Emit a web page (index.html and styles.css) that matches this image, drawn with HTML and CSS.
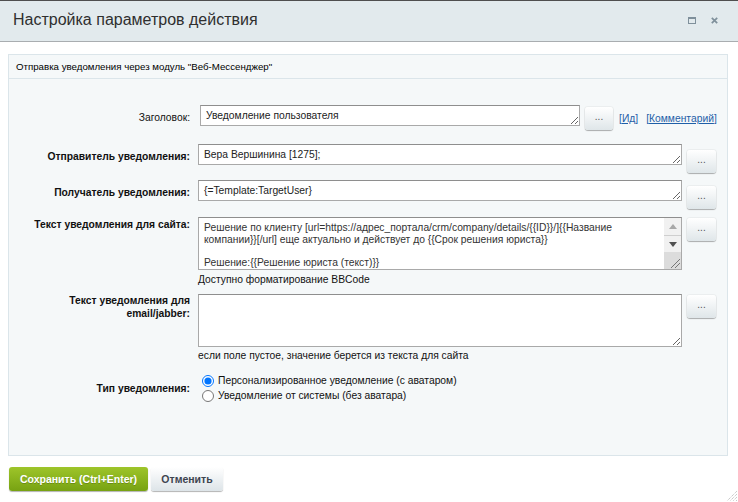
FILE: index.html
```html
<!DOCTYPE html>
<html lang="ru">
<head>
<meta charset="utf-8">
<title>Настройка параметров действия</title>
<link rel="stylesheet" href="styles.css">
</head>
<body>
<div class="dialog">
  <div class="topline"></div>
  <div class="titlebar">
    <span class="title">Настройка параметров действия</span>
    <span class="win-icons">
      <svg class="ico-max" width="8" height="7" viewBox="0 0 8 7"><rect x="0.5" y="0.5" width="7" height="6" fill="none" stroke="#7f909b"/><rect x="0" y="0" width="8" height="2" fill="#7f909b"/></svg>
      <svg class="ico-close" width="7" height="7" viewBox="0 0 7 7"><path d="M0.8 0.8 L6.2 6.2 M6.2 0.8 L0.8 6.2" stroke="#7f909b" stroke-width="1.7"/></svg>
    </span>
  </div>
  <div class="content">
    <div class="panel">
      <div class="panel-head">Отправка уведомления через модуль "Веб-Мессенджер"</div>
      <div class="form">
        <div class="row row-title">
          <div class="label plain">Заголовок:</div>
          <div class="field">
            <textarea class="inp inp-short" rows="1">Уведомление пользователя</textarea>
            <button class="dots dots-r1" type="button">...</button>
            <span class="links"><a class="lnk" href="#">[<u>Ид</u>]</a><a class="lnk" href="#">[<u>Комментарий</u>]</a></span>
          </div>
        </div>
        <div class="row row-sender">
          <div class="label">Отправитель уведомления:</div>
          <div class="field">
            <textarea class="inp" rows="1">Вера Вершинина [1275];</textarea>
            <button class="dots dots-low" type="button">...</button>
          </div>
        </div>
        <div class="row row-recipient">
          <div class="label">Получатель уведомления:</div>
          <div class="field">
            <textarea class="inp" rows="1">{=Template:TargetUser}</textarea>
            <button class="dots dots-low" type="button">...</button>
          </div>
        </div>
        <div class="row row-site">
          <div class="label top">Текст уведомления для сайта:</div>
          <div class="field-col">
            <div class="field">
              <div class="area-box">
                <textarea class="area-text">Решение по клиенту [url=https://адрес_портала/crm/company/details/{{ID}}/]{{Название компании}}[/url] еще актуально и действует до {{Срок решения юриста}}

Решение:{{Решение юриста (текст)}}
Комментарий юриста:{{Комментарий юриста}}</textarea>
                <div class="sbar">
                  <div class="sb-btn sb-up"><svg width="8" height="5" viewBox="0 0 8 5"><path d="M0 5 L4 0 L8 5 Z" fill="#a8a8a8"/></svg></div>
                  <div class="sb-btn sb-down"><svg width="8" height="5" viewBox="0 0 8 5"><path d="M0 0 L4 5 L8 0 Z" fill="#505050"/></svg></div>
                  <div class="sb-corner"><svg width="10" height="10" viewBox="0 0 10 10"><path d="M10 1 L1 10 M10 5 L5 10" stroke="#777" stroke-width="1"/></svg></div>
                </div>
              </div>
              <button class="dots dots-area" type="button">...</button>
            </div>
            <div class="note note-site">Доступно форматирование BBCode</div>
          </div>
        </div>
        <div class="row row-mail">
          <div class="label top up">Текст уведомления для email/jabber:</div>
          <div class="field-col">
            <div class="field">
              <textarea class="area"></textarea>
              <button class="dots dots-area" type="button">...</button>
            </div>
            <div class="note note-mail">если поле пустое, значение берется из текста для сайта</div>
          </div>
        </div>
        <div class="row row-type">
          <div class="label mid">Тип уведомления:</div>
          <div class="radios">
            <label class="radio"><input type="radio" name="t" checked> Персонализированное уведомление (с аватаром)</label>
            <label class="radio"><input type="radio" name="t"> Уведомление от системы (без аватара)</label>
          </div>
        </div>
      </div>
    </div>
  </div>
  <div class="footer">
    <button class="btn-save" type="button">Сохранить (Ctrl+Enter)</button>
    <button class="btn-cancel" type="button">Отменить</button>
  </div>
  <svg class="grip" width="12" height="12" viewBox="0 0 12 12">
    <path d="M11 1 L1 11 M11 4 L4 11 M11 7 L7 11 M11 10 L10 11" stroke="#b5b5b5" stroke-width="1" stroke-dasharray="1 1"/>
  </svg>
</div>
</body>
</html>
```
FILE: styles.css
```css
* { box-sizing: border-box; }
html, body { margin: 0; padding: 0; }
body {
  background: #fff;
  font-family: "Liberation Sans", Arial, sans-serif;
  font-size: 10.3px;
  color: #000;
  width: 738px;
  height: 502px;
  overflow: hidden;
}
.dialog { position: relative; width: 738px; height: 502px; }
.topline { height: 1px; background: #4f4f4f; }
.titlebar {
  height: 41px;
  background: #e2eaed;
  border-bottom: 1px solid #a9adb0;
  display: flex;
  align-items: center;
  padding: 0 20px 0 13px;
}
.title { flex: 1; font-size: 16px; color: #2f2f2f; padding-bottom: 2px; }
.win-icons { display: flex; align-items: center; gap: 15px; padding-bottom: 1px; }
.content { padding: 12px 10px 0 8px; }
.panel {
  border: 1px solid #dbe5ea;
  background: #f5f8f9;
  height: 402px;
}
.panel-head {
  height: 24px;
  line-height: 24px;
  padding: 0 7px;
  border-bottom: 1px solid #dbe5ea;
  color: #000;
  font-size: 9.7px;
}
.form { padding-top: 26px; }
.row {
  display: grid;
  grid-template-columns: 181px 1fr;
  column-gap: 8px;
}
.label {
  text-align: right;
  font-weight: bold;
  line-height: 13px;
  padding-top: 6px;
  color: #111;
}
.label.plain { font-weight: normal; }
.label.top { padding-top: 1px; }
.label.up { padding-top: 0; }
.label.mid { align-self: center; padding-top: 1px; }
.field { display: flex; align-items: flex-start; }
.field-col { display: flex; flex-direction: column; }
.inp {
  width: 484px;
  height: 21px;
  border: 1px solid #a9a9a9;
  border-top-color: #8e8e8e;
  background: #fff;
  font-family: "Liberation Sans", Arial, sans-serif;
  font-size: 10.3px;
  line-height: 13px;
  padding: 3px 5px;
  color: #222;
  overflow: hidden;
  margin: 0;
  white-space: nowrap;
}
.inp-short { width: 380px; margin-left: 2px; padding-left: 5px; }
.area {
  width: 484px;
  height: 53px;
  border: 1px solid #a9a9a9;
  border-top-color: #8e8e8e;
  background: #fff;
  font-family: "Liberation Sans", Arial, sans-serif;
  font-size: 10.3px;
  line-height: 11.4px;
  padding: 3px 5px;
  color: #222;
  margin: 0;
}
.area-box {
  width: 484px;
  height: 53px;
  border: 1px solid #a9a9a9;
  border-top-color: #8e8e8e;
  background: #fff;
  display: flex;
}
.area-text {
  flex: 1;
  min-width: 0;
  height: 100%;
  border: none;
  outline: none;
  resize: none;
  overflow: hidden;
  background: transparent;
  font-family: "Liberation Sans", Arial, sans-serif;
  font-size: 10.3px;
  line-height: 11.6px;
  padding: 4px 5px 0;
  color: #333;
  margin: 0;
}
.sbar {
  width: 17px;
  background: #f1f1f1;
  display: flex;
  flex-direction: column;
}
.sb-btn {
  height: 17px;
  display: flex;
  align-items: center;
  justify-content: center;
}
.sb-up { border-bottom: 1px solid #cfcfcf; height: 18px; }
.sb-down { height: 16px; }
.sb-corner {
  flex: 1;
  background: #dcdcdc;
  display: flex;
  align-items: flex-end;
  justify-content: flex-end;
  padding: 0 1px 1px 0;
}
.dots {
  width: 29px;
  height: 23px;
  margin-left: 5px;
  border: none;
  border-radius: 3px;
  background: linear-gradient(#ffffff, #dfe6e9);
  box-shadow: 0 1px 1px rgba(0,0,0,0.28), 0 0 0 1px rgba(0,0,0,0.04);
  color: #555;
  font-family: "Liberation Sans", Arial, sans-serif;
  font-size: 10px;
  line-height: 14px;
  padding: 0 0 4px;
  cursor: pointer;
}
.dots-r1 { width: 28px; margin-top: 2px; }
.dots-low { margin-top: 6px; }
.dots-area { margin-top: 1px; }
.links { display: flex; gap: 8px; margin-left: 6px; margin-top: 7px; }
.lnk { color: #1f5fa8; text-decoration: none; line-height: 13px; }
.lnk u { text-decoration: underline; }
.note { line-height: 13px; color: #111; }
.note-site { margin-top: 3px; }
.note-mail { margin-top: 2px; }
.row-title { margin-bottom: 14px; }
.row-sender { margin-bottom: 7px; }
.row-recipient { margin-bottom: 8px; }
.row-site { margin-bottom: 8px; }
.row-mail { margin-bottom: 11px; }
.radios { display: flex; flex-direction: column; padding-left: 4px; }
.radio {
  display: flex;
  align-items: center;
  height: 15px;
  line-height: 15px;
  color: #111;
}
.radio input {
  width: 12px;
  height: 12px;
  margin: 0 4px 0 0;
}
.footer { display: flex; gap: 3px; padding: 11px 0 0 9px; }
.btn-save, .btn-cancel {
  height: 24px;
  border: none;
  border-radius: 3px;
  font-family: "Liberation Sans", Arial, sans-serif;
  font-size: 10.5px;
  font-weight: bold;
  cursor: pointer;
  padding: 0;
}
.btn-save {
  width: 139px;
  color: #fff;
  background: linear-gradient(#9ec52a, #77a212);
  box-shadow: 0 1px 1px rgba(0,0,0,0.3);
  text-shadow: 0 1px 0 rgba(0,0,0,0.2);
}
.btn-cancel {
  width: 72px;
  color: #3d4450;
  background: linear-gradient(#ffffff, #dde4e8);
  box-shadow: 0 1px 1px rgba(0,0,0,0.3);
}
.grip { position: absolute; right: 0; bottom: 0; }
```
